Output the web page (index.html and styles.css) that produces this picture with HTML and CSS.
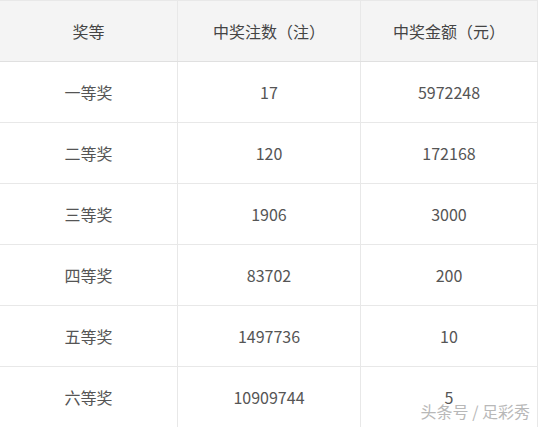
FILE: index.html
```html
<!DOCTYPE html>
<html lang="zh">
<head>
<meta charset="utf-8">
<link rel="stylesheet" href="styles.css">
</head>
<body>
<div class="wrap">
  <table class="prize">
    <thead>
      <tr><th>奖等</th><th>中奖注数（注）</th><th>中奖金额（元）</th></tr>
    </thead>
    <tbody>
      <tr><td>一等奖</td><td>17</td><td>5972248</td></tr>
      <tr><td>二等奖</td><td>120</td><td>172168</td></tr>
      <tr><td>三等奖</td><td>1906</td><td>3000</td></tr>
      <tr><td>四等奖</td><td>83702</td><td>200</td></tr>
      <tr><td>五等奖</td><td>1497736</td><td>10</td></tr>
      <tr><td>六等奖</td><td>10909744</td><td>5</td></tr>
    </tbody>
  </table>
  <div class="mark">头条号 / 足彩秀</div>
</div>
</body>
</html>
```
FILE: styles.css
```css
html, body {
  margin: 0;
  padding: 0;
  background: #fff;
}
.wrap {
  position: relative;
  width: 540px;
  height: 427px;
  overflow: hidden;
}
.prize {
  border-collapse: collapse;
  width: 538px;
  margin-left: -1px;
  table-layout: fixed;
  font-family: "Microsoft YaHei", "Noto Sans CJK SC", sans-serif;
  font-size: 16px;
  color: #555;
}
.prize th, .prize td {
  border: 1px solid #e8e8e8;
  height: 60px;
  padding: 0;
  text-align: center;
  vertical-align: middle;
  font-weight: normal;
  line-height: 20px;
}
.prize th {
  background: #f4f4f4;
  color: #444;
  border-bottom-color: #e0e0e0;
}
.prize th:nth-child(1) { width: 177px; }
.prize th:nth-child(2) { width: 182px; }
.prize th:nth-child(3) { width: 176px; }
.mark {
  position: absolute;
  right: 10px;
  bottom: 6px;
  font-family: "Noto Sans CJK SC", sans-serif;
  font-size: 16px;
  line-height: 20px;
  color: #b8b8b8;
  text-shadow: 0 0 1px #fff;
}
```
